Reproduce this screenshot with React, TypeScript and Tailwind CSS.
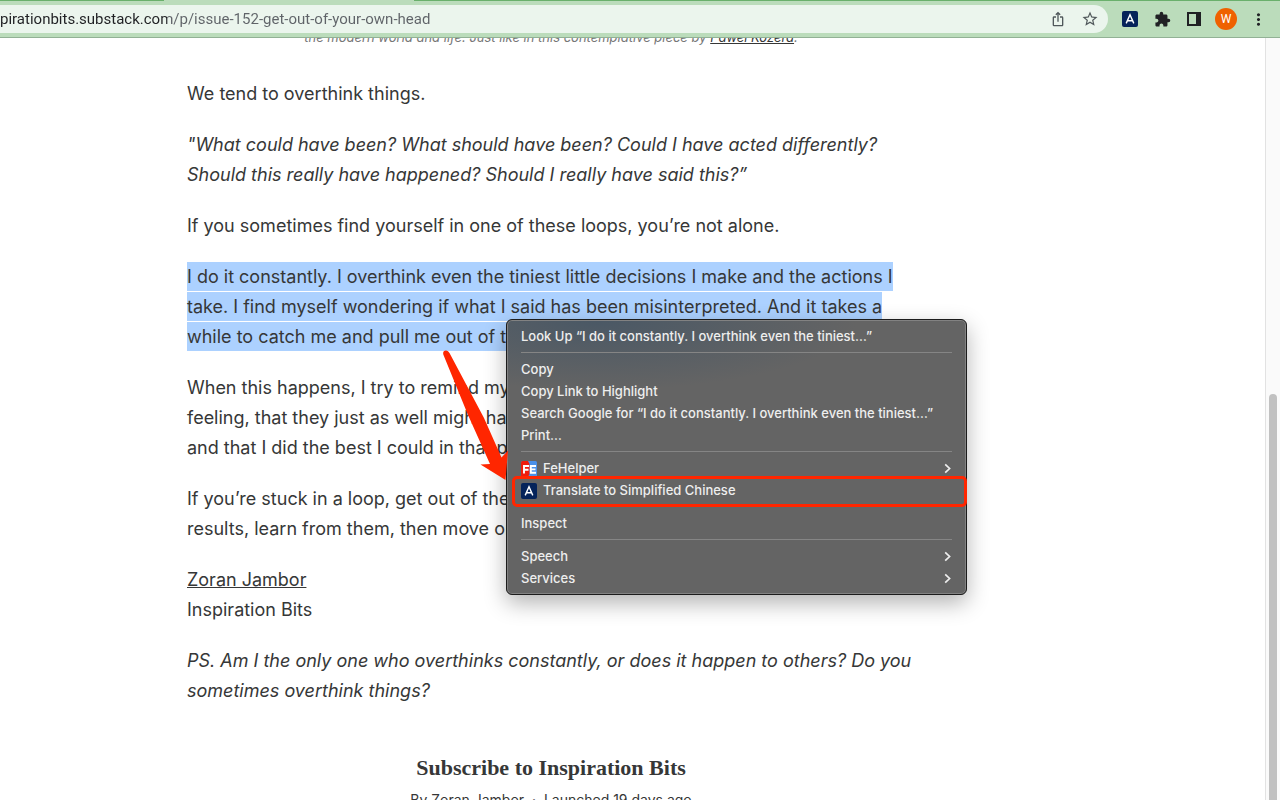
import type { ReactNode } from "react";
import { MdExtension, MdStarBorder, MdMoreVert, MdOutlineIosShare } from "react-icons/md";

interface MenuEntry {
  label: string;
  icon?: ReactNode;
  submenu?: boolean;
}

function TranslateIcon() {
  return (
    <svg width="16" height="16" viewBox="0 0 16 16" aria-hidden="true">
      <rect width="16" height="16" rx="2" fill="#05235a" />
      <path d="M4.2 12.4 8 3.8l3.8 8.6M5.5 9.8h5" fill="none" stroke="#fff" strokeWidth="1.4" />
    </svg>
  );
}

function FeHelperIcon() {
  return (
    <svg width="16" height="16" viewBox="0 0 16 16" aria-hidden="true">
      <rect width="16" height="16" rx="1.5" fill="#4a90e8" />
      <path d="M1.5 0H7l1.5 3v10L7 16H1.5Q0 16 0 14.5v-13Q0 0 1.5 0z" fill="#ee1c0c" />
      <path d="M3 12.5V5h5M3 8.7h4.5M15 5H9.8v6.7H15M9.8 8.4h4.7" fill="none" stroke="#fff" strokeWidth="1.9" />
    </svg>
  );
}

function SidePanelIcon() {
  return (
    <svg width="14" height="14" viewBox="0 0 14 14" aria-hidden="true">
      <path d="M0 0h14v14H0zM2 2v10h7V2z" fill="#202124" fillRule="evenodd" />
    </svg>
  );
}

const groups: MenuEntry[][] = [
  [{ label: "Look Up “I do it constantly. I overthink even the tiniest…”" }],
  [
    { label: "Copy" },
    { label: "Copy Link to Highlight" },
    { label: "Search Google for “I do it constantly. I overthink even the tiniest…”" },
    { label: "Print…" },
  ],
  [
    { label: "FeHelper", icon: <FeHelperIcon />, submenu: true },
    { label: "Translate to Simplified Chinese", icon: <TranslateIcon /> },
  ],
  [{ label: "Inspect" }],
  [
    { label: "Speech", submenu: true },
    { label: "Services", submenu: true },
  ],
];

function Toolbar() {
  return (
    <header className="relative z-10 shrink-0 border-b border-[#92b195] bg-[#bbdcbb]">
      <div className="flex h-px">
        <div className="w-[164px] bg-[#6ab06c]" />
        <div className="w-[250px]" />
        <div className="flex-1 bg-[#6ab06c]" />
      </div>
      <div className="flex h-9 items-center">
        <div className="flex h-7 flex-1 items-center rounded-r-full bg-[#ebf5ed] pr-[9px]">
          <input
            aria-label="Address"
            defaultValue="pirationbits.substack.com/p/issue-152-get-out-of-your-own-head"
            className="min-w-0 flex-1 bg-linear-[90deg,#202124_167px,#5f6368_167px] bg-clip-text font-[Roboto,sans-serif] text-[15px] text-transparent outline-none"
          />
          <div className="flex gap-[15px] text-[#50585b]">
            <button aria-label="Share"><MdOutlineIosShare size={16} /></button>
            <button aria-label="Bookmark"><MdStarBorder size={18} /></button>
          </div>
        </div>
        <div className="flex items-center px-[6px] text-[#202124]">
          <button aria-label="Translate" className="flex w-8 justify-center"><TranslateIcon /></button>
          <button aria-label="Extensions" className="flex w-8 justify-center"><MdExtension size={17} /></button>
          <button aria-label="Side panel" className="flex w-8 justify-center"><SidePanelIcon /></button>
          <button aria-label="Profile" className="flex w-8 justify-center">
            <span className="flex size-[22px] items-center justify-center rounded-full bg-[#ef6100] font-[Roboto,sans-serif] text-xs text-white">W</span>
          </button>
          <button aria-label="More" className="flex w-8 justify-center"><MdMoreVert size={19} /></button>
        </div>
      </div>
    </header>
  );
}

function Article() {
  return (
    <article className="ml-[187px] w-full max-w-[728px] text-[18px] leading-[30px] text-[#363737]">
      <p className="-mt-3 text-center text-[13px] leading-[22px] text-[#777] italic">
        the modern world and life. Just like in this contemplative piece by{" "}
        <a href="#kozera" className="text-[#363737] underline">Paweł Kozera</a>.
      </p>
      <div className="mt-[31px] space-y-[21px]">
        <p>We tend to overthink things.</p>
        <p className="italic">
          "What could have been? What should have been? Could I have acted differently?
          <br />
          Should this really have happened? Should I really have said this?”
        </p>
        <p>If you sometimes find yourself in one of these loops, you’re not alone.</p>
        <p>
          <mark className="bg-[#acd1ff] py-1 text-inherit">
            I do it constantly. I overthink even the tiniest little decisions I make and the actions I
            <br />
            take. I find myself wondering if what I said has been misinterpreted. And it takes a
            <br />
            while to catch me and pull me out of the
          </mark>
        </p>
        <p>
          When this happens, I try to remind my
          <br />
          feeling, that they just as well might have
          <br />
          and that I did the best I could in that p
        </p>
        <p>
          If you’re stuck in a loop, get out of the
          <br />
          results, learn from them, then move on
        </p>
        <p>
          <a href="#author" className="underline">Zoran Jambor</a>
          <br />
          Inspiration Bits
        </p>
        <p className="italic">
          PS. Am I the only one who overthinks constantly, or does it happen to others? Do you
          <br />
          sometimes overthink things?
        </p>
      </div>
      <section className="mt-12 text-center">
        <h2 className="font-['Liberation_Serif',serif] text-[22px] leading-7 font-bold">Subscribe to Inspiration Bits</h2>
        <p className="mt-2 text-[14px] leading-5">By Zoran Jambor &nbsp;·&nbsp; Launched 19 days ago</p>
      </section>
    </article>
  );
}

function ContextMenu() {
  return (
    <div
      role="menu"
      className="absolute top-[319px] left-[506px] w-[461px] rounded-md border border-[#1c1c1c] bg-[#646464] bg-[radial-gradient(ellipse_260px_70px_at_90px_0px,#4a5865,#4a586500)] py-[5px] text-[13px] font-medium text-[#eeeeee] shadow-[0_8px_22px_rgba(0,0,0,0.3),inset_0_0_0_1px_#828282]"
    >
      {groups.map((group, index) => (
        <div key={index}>
          {index > 0 && <hr className="mx-[14px] my-[5px] border-[#858585]" />}
          {group.map((entry) => (
            <button key={entry.label} role="menuitem" className="flex h-[22px] w-full items-center gap-[6px] px-[14px] pt-0.5 whitespace-nowrap">
              {entry.icon}
              <span>{entry.label}</span>
              {entry.submenu && (
                <svg className="ml-auto" width="9" height="12" viewBox="0 0 9 12" aria-hidden="true">
                  <path d="m2.2 1.3 4.4 4.2-4.4 4.2" fill="none" stroke="#eee" strokeWidth="1.7" />
                </svg>
              )}
            </button>
          ))}
        </div>
      ))}
    </div>
  );
}

// red arrow and frame drawn over the page
function Annotation() {
  return (
    <>
      <svg className="absolute top-[348px] left-[440px]" width="70" height="134" viewBox="440 348 70 134" aria-hidden="true">
        <path d="M443.3 354.5Q442.5 351 445.5 350.5 448 350 449.5 353L484 418l17.500 39.500 6.5-7-2.500 29.500-25-15.500 9.500-.5-22-49z" fill="#ff2600" />
      </svg>
      <div className="absolute top-[476px] left-[512px] h-[31px] w-[455px] rounded-[5px] border-3 border-[#ff2600]" />
    </>
  );
}

export default function App() {
  return (
    <div className="relative flex h-screen flex-col overflow-hidden bg-white font-[Inter,sans-serif]">
      <Toolbar />
      <div className="flex min-h-0 flex-1">
        <main className="min-w-0 flex-1 overflow-hidden">
          <Article />
        </main>
        <div className="w-[15px] border-l border-[#e2e2e2] bg-[#fafafa] px-[3px] pt-[356px]">
          <div className="h-full rounded-t-full bg-[#c1c1c1]" />
        </div>
      </div>
      <ContextMenu />
      <Annotation />
    </div>
  );
}
